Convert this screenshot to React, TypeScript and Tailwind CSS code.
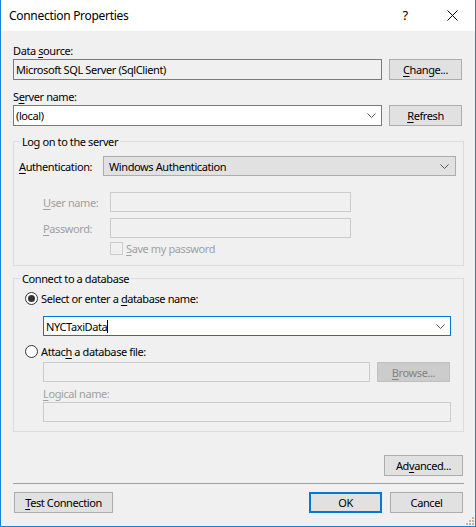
import type { ReactNode } from 'react'

// mnemonic letter, underlined like a Win32 access key
function K({ children }: { children: string }) {
  return (
    <span className="underline decoration-[1px] underline-offset-[2px]">
      {children}
    </span>
  )
}

function Chevron({ color = '#555555' }: { color?: string }) {
  return (
    <svg width="9" height="5" viewBox="0 0 9 5" className="shrink-0">
      <path
        d="M0.5 0.5 L4.5 4.5 L8.5 0.5"
        fill="none"
        stroke={color}
        strokeWidth="1"
      />
    </svg>
  )
}

function Radio({ checked }: { checked?: boolean }) {
  return (
    <span className="w-[13px] h-[13px] rounded-full border border-[#333333] bg-white flex items-center justify-center shrink-0">
      {checked && <span className="w-[7px] h-[7px] rounded-full bg-[#333333]" />}
    </span>
  )
}

function Button({
  className,
  children,
}: {
  className: string
  children: ReactNode
}) {
  return (
    <button
      type="button"
      className={`h-[21px] bg-[#e1e1e1] border border-[#adadad] flex items-center justify-center shrink-0 ${className}`}
    >
      {children}
    </button>
  )
}

export default function App() {
  return (
    <div className="w-[476px] h-[527px] bg-[#f0f0f0] border-x border-b border-[#1883d7] flex flex-col relative text-[11px] leading-[15px] tracking-[-0.4px] text-black font-['Noto_Sans',sans-serif] select-none">
      {/* caption */}
      <div className="h-[31px] bg-white flex items-center pl-[8px] shrink-0">
        <span className="text-[12px] tracking-[-0.3px] flex-1">Connection Properties</span>
        <span className="text-[13px] w-[10px] mr-[37px] text-center">?</span>
        <svg width="11" height="11" viewBox="0 0 11 11" className="mr-[17px]">
          <path d="M0.5 0.5 L10.5 10.5 M10.5 0.5 L0.5 10.5" stroke="#000" strokeWidth="1" />
        </svg>
      </div>

      <div className="flex flex-col pl-[12px] pr-[11px]">
        <div className="mt-[12px]">
          Data <K>s</K>ource:
        </div>
        <div className="flex gap-[7px] mt-[1px]">
          <div className="w-[369px] h-[21px] border border-[#7a7a7a] bg-[#f0f0f0] flex items-center pl-[2px]">
            Microsoft SQL Server (SqlClient)
          </div>
          <Button className="w-[73px]">
            <K>C</K>hange...
          </Button>
        </div>

        <div className="mt-[9px]">
          S<K>e</K>rver name:
        </div>
        <div className="flex gap-[7px] mt-[1px]">
          <div className="w-[369px] h-[21px] border border-[#7a7a7a] bg-white flex items-center pl-[2px] pr-[5px]">
            <span className="flex-1">(local)</span>
            <Chevron />
          </div>
          <Button className="w-[73px]">
            <K>R</K>efresh
          </Button>
        </div>

        {/* log on group */}
        <fieldset className="mt-[8px] border border-[#dcdcdc] pl-[5px] pb-[9px]">
          <legend className="ml-[1px] px-[2px]">Log on to the server</legend>
          <div className="flex items-center mt-[7px]">
            <span className="w-[84px]">
              <K>A</K>uthentication:
            </span>
            <div className="w-[353px] h-[20px] bg-[#e1e1e1] border border-[#adadad] flex items-center pl-[5px] pr-[6px]">
              <span className="flex-1">Windows Authentication</span>
              <Chevron />
            </div>
          </div>
          <div className="flex items-center mt-[16px] pl-[24px] text-[#a0a0a0]">
            <span className="w-[67px]">
              <K>U</K>ser name:
            </span>
            <div className="w-[241px] h-[20px] border border-[#cccccc] bg-[#f0f0f0]" />
          </div>
          <div className="flex items-center mt-[6px] pl-[24px] text-[#a0a0a0]">
            <span className="w-[67px]">
              <K>P</K>assword:
            </span>
            <div className="w-[241px] h-[20px] border border-[#cccccc] bg-[#f0f0f0]" />
          </div>
          <div className="flex items-center gap-[3px] mt-[3px] pl-[91px] text-[#a0a0a0]">
            <span className="w-[13px] h-[13px] border border-[#cccccc] bg-[#f0f0f0]" />
            <span>
              <K>S</K>ave my password
            </span>
          </div>
        </fieldset>

        {/* database group */}
        <fieldset className="mt-[5px] border border-[#dcdcdc] pl-[11px] pb-[9px]">
          <legend className="-ml-[5px] px-[2px]">Connect to a database</legend>
          <div className="flex items-center gap-[3px] mt-[5px]">
            <Radio checked />
            <span>
              Select or enter a <K>d</K>atabase name:
            </span>
          </div>
          <div className="ml-[18px] mt-[10px] w-[408px] h-[20px] border border-[#0078d7] bg-white flex items-center pl-[2px] pr-[5px]">
            <span>NYCTaxiData</span>
            <span className="w-[1px] h-[13px] bg-black" />
            <span className="flex-1" />
            <Chevron />
          </div>
          <div className="flex items-center gap-[3px] mt-[8px]">
            <Radio />
            <span>
              Attac<K>h</K> a database file:
            </span>
          </div>
          <div className="flex gap-[7px] ml-[18px] mt-[3px]">
            <div className="w-[327px] h-[20px] border border-[#cccccc] bg-[#f0f0f0]" />
            <div className="w-[73px] h-[20px] bg-[#cccccc] border border-[#bfbfbf] text-[#838383] flex items-center justify-center">
              <span>
                <K>B</K>rowse...
              </span>
            </div>
          </div>
          <div className="ml-[18px] mt-[4px] text-[#a0a0a0]">
            <K>L</K>ogical name:
          </div>
          <div className="ml-[18px] mt-[1px] w-[408px] h-[20px] border border-[#cccccc] bg-[#f0f0f0]" />
        </fieldset>

        <div className="flex justify-end mt-[23px] pr-[1px]">
          <Button className="w-[79px]">
            <span>
              Ad<K>v</K>anced...
            </span>
          </Button>
        </div>

        <div className="h-[1px] bg-[#a0a0a0] mt-[7px]" />

        <div className="flex mt-[8px]">
          <Button className="w-[99px] ml-[1px]">
            <span>
              <K>T</K>est Connection
            </span>
          </Button>
          <span className="flex-1" />
          <button
            type="button"
            className="w-[73px] h-[21px] bg-[#e1e1e1] border-2 border-[#0078d7] flex items-center justify-center"
          >
            OK
          </button>
          <Button className="w-[73px] ml-[8px] mr-[1px]">Cancel</Button>
        </div>
      </div>

      {/* size grip */}
      <svg
        width="8"
        height="8"
        viewBox="0 0 8 8"
        className="absolute right-[1px] bottom-[1px]"
      >
        <g fill="#b8b8b8">
          <rect x="6" y="0" width="2" height="2" />
          <rect x="3" y="3" width="2" height="2" />
          <rect x="6" y="3" width="2" height="2" />
          <rect x="0" y="6" width="2" height="2" />
          <rect x="3" y="6" width="2" height="2" />
          <rect x="6" y="6" width="2" height="2" />
        </g>
      </svg>
    </div>
  )
}
